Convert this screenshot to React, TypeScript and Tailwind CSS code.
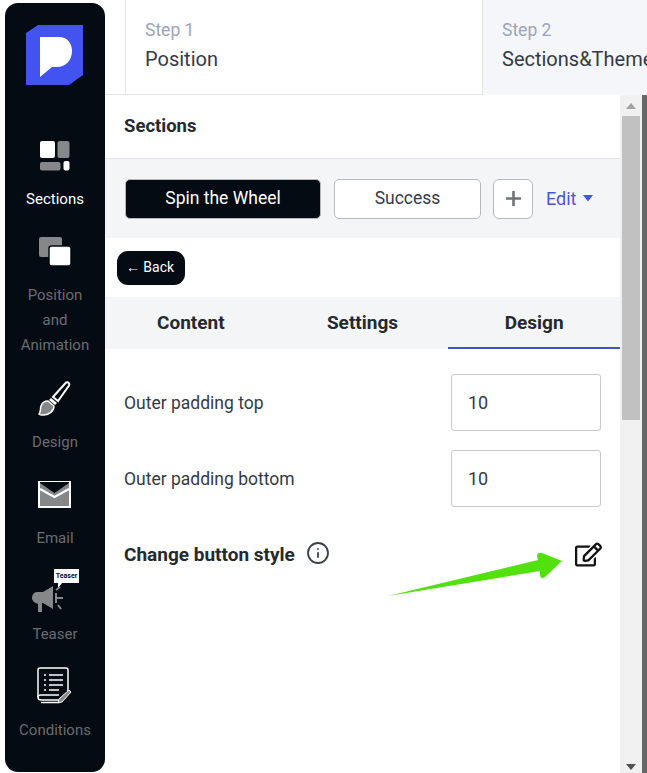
import React from "react";
import { Info } from "lucide-react";
import { FaRegEdit } from "react-icons/fa";

function NavItem({ icon, label, active, h }: { icon: React.ReactNode; label: React.ReactNode; active?: boolean; h: string }) {
  return (
    <div className={`flex flex-col items-center ${h}`}>
      <div className="h-[58px] shrink-0 pb-1 w-full flex items-center justify-center">{icon}</div>
      <div className={`text-center text-[15px] leading-[25px] ${active ? "text-white" : "text-[#6a6d70]"}`}>{label}</div>
    </div>
  );
}

export default function App() {
  return (
    <div className="w-[647px] h-[773px] overflow-hidden bg-white flex font-['Roboto',sans-serif] text-[#24292f]">
      {/* Sidebar */}
      <div className="ml-[5px] mt-[3px] mb-px w-[100px] shrink-0 rounded-[13px] bg-[#040b13] flex flex-col items-center">
        <svg className="mt-[22px] mr-px shrink-0" width="58" height="60" viewBox="0 0 58 60">
          <path d="M12 0H57V50L43 60H0V8Z" fill="#4353f0" />
          <path d="M14 12H33C41 12 46 18 46 26C46 35 40 42 31 42H26L14 52Z" fill="#fff" />
        </svg>
        <div className="mt-[44px] w-full">
          <NavItem
            h="h-[96px]"
            active
            label="Sections"
            icon={
              <svg width="30" height="30" viewBox="0 0 30 30">
                <rect x="0" y="0" width="15" height="17" rx="2" fill="#fff" />
                <rect x="17.500" y="0" width="12" height="17" rx="2" fill="#85878a" />
                <rect x="0" y="21" width="20.500" height="8.500" rx="2" fill="#85878a" />
                <rect x="23.500" y="20" width="6" height="9.500" rx="2" fill="#fff" />
              </svg>
            }
          />
          <NavItem
            h="h-[147px]"
            label={<>Position<br />and<br />Animation</>}
            icon={
              <svg width="33" height="30" viewBox="0 0 33 30">
                <rect x="0" y="0" width="23" height="20" rx="2" fill="#85878a" />
                <rect x="10" y="9" width="22" height="20" rx="2.500" fill="#fff" stroke="#040b13" strokeWidth="1.500" />
              </svg>
            }
          />
          <NavItem
            h="h-[96px]"
            label="Design"
            icon={
              <svg width="34" height="36" viewBox="0 0 34 36">
                <path d="M28 1.500c2-1 4 1 3 3L20 20l-5-4z" fill="none" stroke="#fff" strokeWidth="2" />
                <path d="M13 17l6 5-2 2-6-5z" fill="#fff" />
                <path d="M10 20l6 5c0 5-5 9-10 9-3 0-5 0-5-1 2-2 1-5 2-8 1-3 4-5 7-5z" fill="#85878a" stroke="#fff" strokeWidth="1.500" />
              </svg>
            }
          />
          <NavItem
            h="h-[96px]"
            label="Email"
            icon={
              <svg className="-mt-0.5 mr-0.5" width="33" height="27" viewBox="0 0 33 27">
                <rect x="1" y="1" width="31" height="25" fill="#85878a" stroke="#fff" strokeWidth="2" />
                <path d="M2 2L16.500 12L31 2V1H2Z" fill="#040b13" />
                <path d="M2 8L16.500 16L31 8" fill="none" stroke="#fff" strokeWidth="2" />
              </svg>
            }
          />
          <NavItem
            h="h-[96px]"
            label="Teaser"
            icon={
              <div className="relative w-[48px] h-[44px]">
                <div className="absolute left-[23px] top-0 w-[25px] h-[14px] bg-white text-[#040b13] text-[7px] font-bold leading-[14px] text-center">Teaser</div>
                <svg className="absolute left-0 top-0" width="48" height="44" viewBox="0 0 48 44">
                  <path d="M27 13l5 0-5 6z" fill="#fff" />
                  <path d="M1 29c0-3 2-6 5-6h6l10-6v23l-10-6H11v9H7V35c-3-1-6-3-6-6z" fill="#85878a" />
                  <path d="M25 24v10M25 21l4-3M26 29h6M27 36l3 4" stroke="#85878a" strokeWidth="2" fill="none" />
                </svg>
              </div>
            }
          />
          <NavItem
            h="h-[83px]"
            label="Conditions"
            icon={
              <svg className="-mt-[2px] mr-[2px]" width="36" height="38" viewBox="0 0 36 38">
                <path d="M2 30V3c0-1 1-2 2-2h26c1 0 2 1 2 2v24" fill="none" stroke="#fff" strokeWidth="1.500" />
                <path d="M2 30c0 2 1 3 3 3h18M2 30c0-1 1-2 3-2h18M5 35.500h17" fill="none" stroke="#fff" strokeWidth="1.500" />
                <path d="M8 8h2M13 8h14M8 13h2M13 13h14M8 18h2M13 18h14M8 23h2M13 23h10" stroke="#fff" strokeWidth="1.500" />
                <path d="M33 23l2 2-9 10-4 1 1-4z" fill="#85878a" stroke="#fff" strokeWidth="1" />
              </svg>
            }
          />
        </div>
      </div>

      {/* Main */}
      <div className="flex-1 min-w-0 flex flex-col">
        {/* Steps */}
        <div className="h-[95px] shrink-0 flex">
          <div className="w-5 shrink-0 border-b border-[#e2e4e8]" />
          <div className="w-[358px] shrink-0 bg-white border-l border-r border-b border-[#e2e4e8] pl-[19px] pt-[19px]">
            <div className="text-[17.500px] leading-[22px] text-[#9aa5bd]">Step 1</div>
            <div className="mt-[6px] text-[20px] leading-[24px] text-[#343a45]">Position</div>
          </div>
          <div className="flex-1 min-w-0 overflow-hidden bg-[#f5f6f9] pl-[19px] pt-[19px] whitespace-nowrap">
            <div className="text-[17.500px] leading-[22px] text-[#9aa5bd]">Step 2</div>
            <div className="mt-[6px] text-[20px] leading-[24px] text-[#343a45]">Sections&Theme</div>
          </div>
        </div>
        {/* Body */}
        <div className="flex-1 min-h-0 flex">
          <div className="w-[515px] shrink-0 flex flex-col">
            <div className="h-[64px] shrink-0 flex items-center pl-[19px] pt-px border-b border-[#e2e4e8]">
              <span className="text-[18.500px] font-bold text-[#24292f]">Sections</span>
            </div>
            <div className="h-[79px] shrink-0 bg-[#f4f5f7] flex items-center pl-5">
              <div className="w-[196px] h-[40px] rounded-[5px] bg-[#040b13] border border-[#b9b9b9] text-white text-[17.500px] flex items-center justify-center">Spin the Wheel</div>
              <div className="ml-[13px] w-[147px] h-[40px] rounded-[5px] bg-white border border-[#b9b9b9] text-[#343a45] text-[17.500px] flex items-center justify-center">Success</div>
              <div className="ml-3 w-[40px] h-[40px] rounded-[6px] bg-white border border-[#b9b9b9] flex items-center justify-center">
                <svg width="15" height="15" viewBox="0 0 15 15"><path d="M7.500 0v15M0 7.500h15" stroke="#6f7276" strokeWidth="2.600" /></svg>
              </div>
              <span className="ml-[13px] text-[#4a56d8] text-[18px]">Edit</span>
              <svg className="ml-[7px]" width="10" height="7" viewBox="0 0 10 7"><path d="M0 0h10L5 6.500z" fill="#4353f0" /></svg>
            </div>
            <div className="h-[59px] shrink-0 flex items-center pl-3">
              <div className="w-[68px] h-[34px] rounded-[11px] bg-[#040b13] text-white text-[14px] flex items-center justify-center pr-[2px]">← Back</div>
            </div>
            <div className="h-[52px] shrink-0 bg-[#f4f5f7] grid grid-cols-3 text-[19px] font-bold text-[#24292f]">
              <div className="flex items-center justify-center">Content</div>
              <div className="flex items-center justify-center">Settings</div>
              <div className="flex items-center justify-center pt-[2px] border-b-2 border-[#4353c4]">Design</div>
            </div>
            <div className="pl-[19px] pr-[19px] pt-[24px]">
              <div className="flex items-center justify-between h-[58px]">
                <span className="pt-[2px] text-[17.500px] text-[#343a45]">Outer padding top</span>
                <div className="w-[150px] h-[57px] rounded-[3px] border border-[#c9c9c9] pl-4 pt-px flex items-center text-[18px] text-[#343a45]">10</div>
              </div>
              <div className="mt-[18px] flex items-center justify-between h-[58px]">
                <span className="pt-[2px] text-[17.500px] text-[#343a45]">Outer padding bottom</span>
                <div className="w-[150px] h-[57px] rounded-[3px] border border-[#c9c9c9] pl-4 flex items-center text-[18px] text-[#343a45]">10</div>
              </div>
              <div className="relative mt-[20px] flex items-center h-[56px]">
                <span className="text-[19px] font-bold text-[#24292f]">Change button style</span>
                <Info className="ml-[11px] -mt-[4px]" size={24} strokeWidth={1.800} color="#3a4048" />
                <FaRegEdit className="ml-auto mr-[-1px] -mt-[1px]" size={27} color="#111" />
                <svg className="absolute left-[256px] top-[14px]" width="190" height="60" viewBox="0 0 190 60">
                  <path d="M8 55 L158 19 L157 15 C157 12 160 11 162 12 L182 20 L165 36 C163 38 160 37 160 34 L160 30 Z" fill="#52e00f" />
                </svg>
              </div>
            </div>
          </div>
          {/* Scrollbar */}
          <div className="w-[22px] shrink-0 bg-[#f1f1f1] flex flex-col items-center">
            <svg className="mt-[8px]" width="10" height="6" viewBox="0 0 10 6"><path d="M5 0l5 6H0z" fill="#a3a3a3" /></svg>
            <div className="mt-[7px] w-[18px] h-[304px] bg-[#c1c1c1]" />
            <div className="flex-1" />
            <svg className="mb-[3px]" width="10" height="6" viewBox="0 0 10 6"><path d="M5 6L0 0h10z" fill="#505050" /></svg>
          </div>
          <div className="w-[5px] shrink-0 bg-[#666]" />
        </div>
      </div>
    </div>
  );
}
